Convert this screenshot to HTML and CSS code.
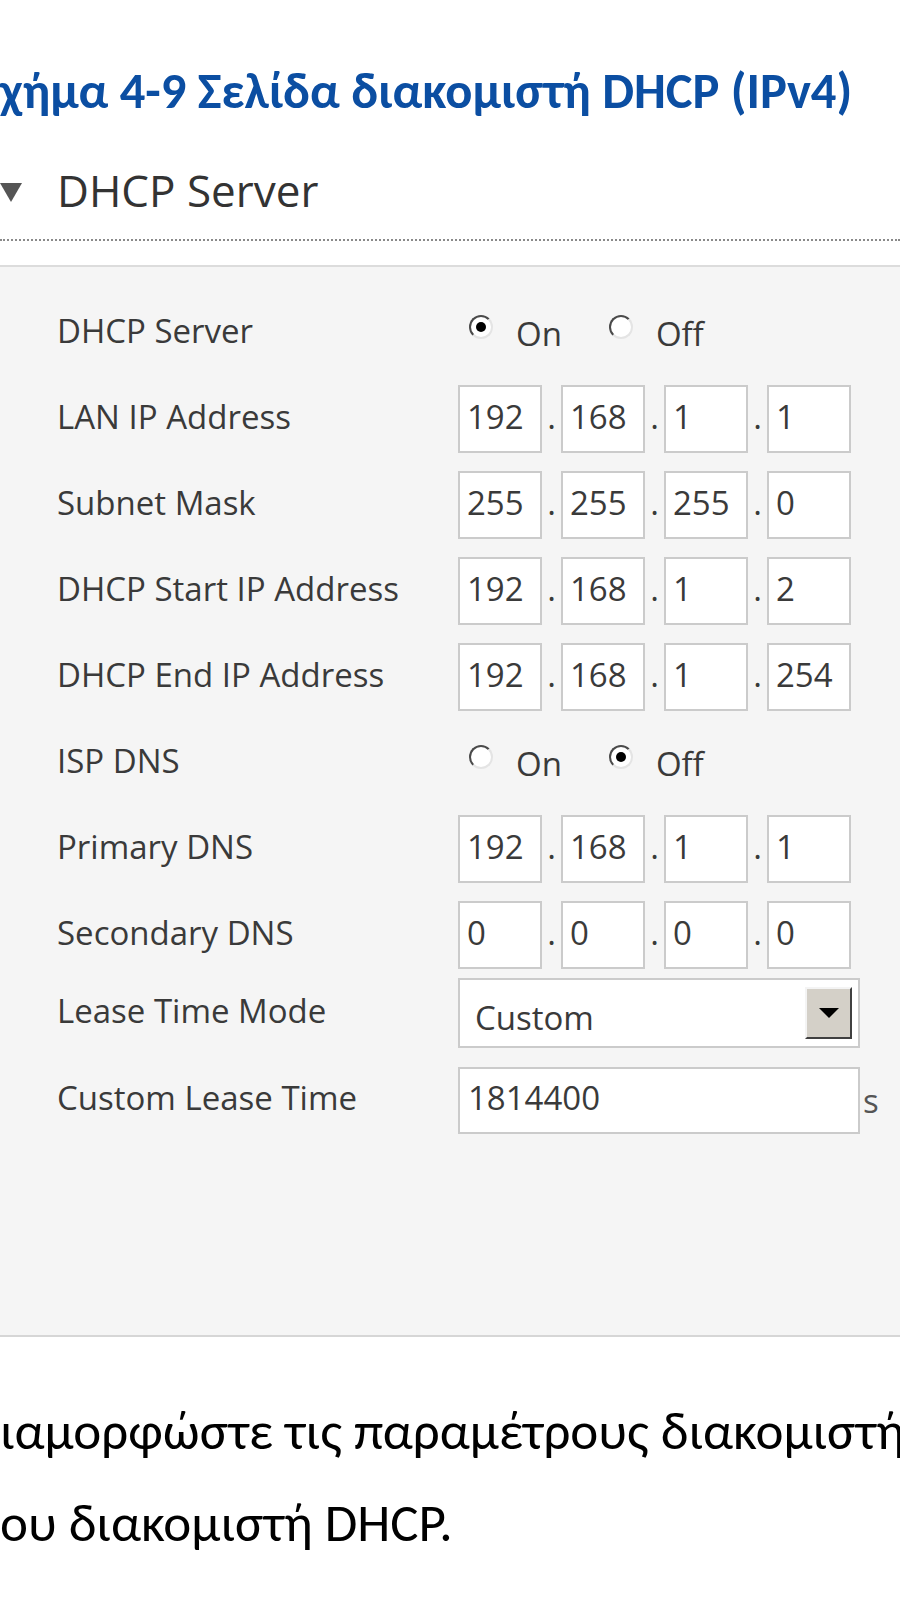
FILE: index.html
```html
<!DOCTYPE html>
<html lang="el">
<head>
  <meta charset="UTF-8">
  <title>DHCP Server</title>
  <link rel="stylesheet" href="styles.css">
</head>
<body>

<div class="page">
  <p class="caption">χήμα 4-9 Σελίδα διακομιστή DHCP (IPv4)</p>

  <div class="section-head">
    <span class="arrow"></span>
    <h2>DHCP Server</h2>
  </div>

  <div class="panel">
    <div class="row">
      <span class="label">DHCP Server</span>
      <div class="ctrl">
        <span class="radio checked"></span><span class="opt">On</span>
        <span class="radio"></span><span class="opt">Off</span>
      </div>
    </div>

    <div class="row">
      <span class="label">LAN IP Address</span>
      <div class="ctrl ip">
        <input class="octet" value="192"><span class="dot">.</span><input class="octet" value="168"><span class="dot">.</span><input class="octet" value="1"><span class="dot">.</span><input class="octet" value="1">
      </div>
    </div>

    <div class="row">
      <span class="label">Subnet Mask</span>
      <div class="ctrl ip">
        <input class="octet" value="255"><span class="dot">.</span><input class="octet" value="255"><span class="dot">.</span><input class="octet" value="255"><span class="dot">.</span><input class="octet" value="0">
      </div>
    </div>

    <div class="row">
      <span class="label">DHCP Start IP Address</span>
      <div class="ctrl ip">
        <input class="octet" value="192"><span class="dot">.</span><input class="octet" value="168"><span class="dot">.</span><input class="octet" value="1"><span class="dot">.</span><input class="octet" value="2">
      </div>
    </div>

    <div class="row">
      <span class="label">DHCP End IP Address</span>
      <div class="ctrl ip">
        <input class="octet" value="192"><span class="dot">.</span><input class="octet" value="168"><span class="dot">.</span><input class="octet" value="1"><span class="dot">.</span><input class="octet" value="254">
      </div>
    </div>

    <div class="row">
      <span class="label">ISP DNS</span>
      <div class="ctrl">
        <span class="radio"></span><span class="opt">On</span>
        <span class="radio checked"></span><span class="opt">Off</span>
      </div>
    </div>

    <div class="row">
      <span class="label">Primary DNS</span>
      <div class="ctrl ip">
        <input class="octet" value="192"><span class="dot">.</span><input class="octet" value="168"><span class="dot">.</span><input class="octet" value="1"><span class="dot">.</span><input class="octet" value="1">
      </div>
    </div>

    <div class="row row-last-ip">
      <span class="label">Secondary DNS</span>
      <div class="ctrl ip">
        <input class="octet" value="0"><span class="dot">.</span><input class="octet" value="0"><span class="dot">.</span><input class="octet" value="0"><span class="dot">.</span><input class="octet" value="0">
      </div>
    </div>

    <div class="row row-select">
      <span class="label">Lease Time Mode</span>
      <div class="ctrl">
        <div class="select">
          <span class="select-text">Custom</span>
          <span class="select-btn"><span class="caret"></span></span>
        </div>
      </div>
    </div>

    <div class="row row-lease">
      <span class="label">Custom Lease Time</span>
      <div class="ctrl">
        <input class="lease" value="1814400"><span class="unit">s</span>
      </div>
    </div>
  </div>

  <p class="text first">ιαμορφώστε τις παραμέτρους διακομιστή</p>
  <p class="text">ου διακομιστή DHCP.</p>
</div>

</body>
</html>
```

FILE: styles.css
```css
html, body {
  margin: 0;
  padding: 0;
  overflow: hidden;
  background: #fff;
}

.page {
  width: 900px;
  font-family: "Open Sans", "Noto Sans", sans-serif;
}

.caption {
  margin: 0;
  height: 130px;
  padding-top: 63px;
  box-sizing: border-box;
  font-family: Carlito, "Open Sans", sans-serif;
  font-size: 50.5px;
  line-height: 56px;
  font-weight: bold;
  color: #0b4ea2;
  white-space: nowrap;
}

.section-head {
  display: flex;
  align-items: center;
  height: 111px;
  padding-top: 10px;
  box-sizing: border-box;
  border-bottom: 2px dotted #8a8a8a;
}

.arrow {
  width: 0;
  height: 0;
  border-left: 11px solid transparent;
  border-right: 11px solid transparent;
  border-top: 19px solid #555;
  margin-top: 6px;
}

h2 {
  margin: 0 0 0 35px;
  font-size: 44px;
  font-weight: normal;
  color: #333;
  line-height: 60px;
}

.panel {
  margin-top: 24px;
  background: #f5f5f5;
  border-top: 2px solid #dcdcdc;
  border-bottom: 2px solid #d6d6d6;
  padding: 32px 0 201px 57px;
}

.row {
  display: flex;
  align-items: center;
  height: 68px;
  margin-bottom: 18px;
}

.row-last-ip {
  margin-bottom: 9px;
}

.row-select {
  height: 70px;
  margin-bottom: 19px;
}

.row-lease {
  height: 67px;
  margin-bottom: 0;
}

.label {
  width: 401px;
  flex-shrink: 0;
  padding-bottom: 6px;
  font-size: 33px;
  color: #3a3a3a;
}

.ctrl {
  display: flex;
  align-items: center;
  height: 100%;
  font-size: 33px;
  color: #3a3a3a;
}

.radio {
  width: 20px;
  height: 20px;
  flex-shrink: 0;
  border-radius: 50%;
  border: 2px solid;
  border-color: #4a4a4a #e4e4e4 #e4e4e4 #4a4a4a;
  background: #fff;
  position: relative;
  margin: 0 23px 0 11px;
  transform: translateY(-6px);
}

.radio.checked::after {
  content: "";
  position: absolute;
  left: 5px;
  top: 5px;
  width: 10px;
  height: 10px;
  border-radius: 50%;
  background: #000;
}

.opt {
  margin-right: 36px;
}

.ip {
  align-items: baseline;
}

.octet {
  width: 84px;
  height: 68px;
  box-sizing: border-box;
  border: 2px solid #cbcbcb;
  background: #fff;
  padding: 0 0 6px 7px;
  margin: 0;
  font-family: inherit;
  font-size: 33px;
  color: #3a3a3a;
  outline: none;
}

.dot {
  width: 19px;
  text-align: center;
}

.select {
  width: 402px;
  height: 70px;
  box-sizing: border-box;
  border: 2px solid #cbcbcb;
  background: #fff;
  display: flex;
  align-items: center;
  justify-content: space-between;
  padding: 0 6px 0 15px;
}

.select-text {
  padding-top: 8px;
}

.select-btn {
  width: 47px;
  height: 52px;
  box-sizing: border-box;
  background: #d4d0c8;
  border: 2px solid;
  border-color: #f4f4f4 #404040 #404040 #f4f4f4;
  display: flex;
  align-items: center;
  justify-content: center;
}

.caret {
  width: 0;
  height: 0;
  border-left: 10px solid transparent;
  border-right: 10px solid transparent;
  border-top: 10px solid #000;
}

.lease {
  width: 402px;
  height: 67px;
  box-sizing: border-box;
  border: 2px solid #cbcbcb;
  background: #fff;
  padding: 0 0 6px 8px;
  margin: 0;
  font-family: inherit;
  font-size: 33px;
  color: #3a3a3a;
  outline: none;
}

.unit {
  margin-left: 3px;
  color: #555;
}

.text {
  margin: 0;
  font-family: Carlito, "Open Sans", sans-serif;
  font-size: 53px;
  line-height: 92px;
  color: #000;
  white-space: nowrap;
}

.text.first {
  margin-top: 48px;
}
```
